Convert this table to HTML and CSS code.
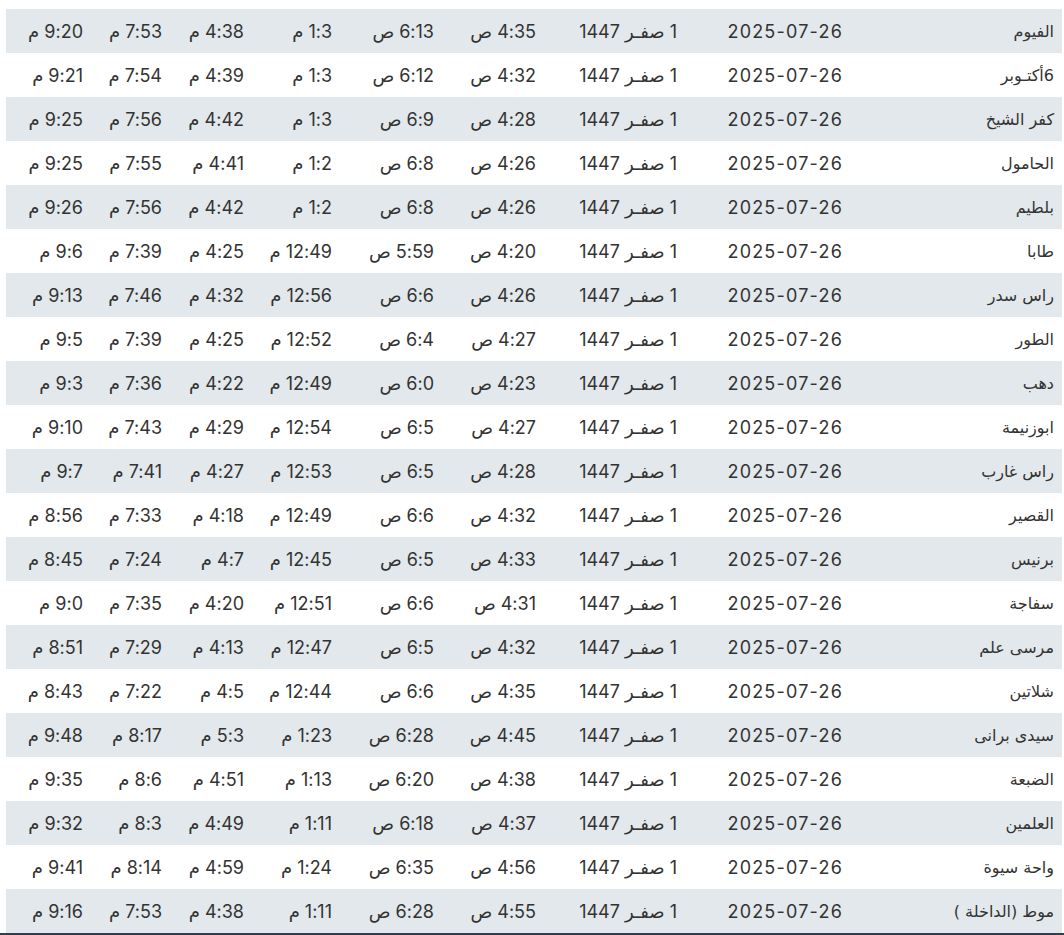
FILE: index.html
```html
<!DOCTYPE html>
<html lang="ar" dir="rtl">
<head>
<meta charset="utf-8">
<title>مواقيت الصلاة</title>
<link rel="stylesheet" href="styles.css">
</head>
<body>
<div class="page">
<table class="times">
<colgroup>
<col class="c-city"><col class="c-greg"><col class="c-hijri"><col class="c-fajr"><col class="c-sun"><col class="c-dhuhr"><col class="c-asr"><col class="c-magh"><col class="c-isha">
</colgroup>
<tbody>
<tr><td class="city">الفيوم</td><td>2025-07-26</td><td>1 صفـر 1447</td><td>4:35 ص</td><td>6:13 ص</td><td>1:3 م</td><td>4:38 م</td><td>7:53 م</td><td>9:20 م</td></tr>
<tr><td class="city">6أكتـوبر</td><td>2025-07-26</td><td>1 صفـر 1447</td><td>4:32 ص</td><td>6:12 ص</td><td>1:3 م</td><td>4:39 م</td><td>7:54 م</td><td>9:21 م</td></tr>
<tr><td class="city">كفر الشيخ</td><td>2025-07-26</td><td>1 صفـر 1447</td><td>4:28 ص</td><td>6:9 ص</td><td>1:3 م</td><td>4:42 م</td><td>7:56 م</td><td>9:25 م</td></tr>
<tr><td class="city">الحامول</td><td>2025-07-26</td><td>1 صفـر 1447</td><td>4:26 ص</td><td>6:8 ص</td><td>1:2 م</td><td>4:41 م</td><td>7:55 م</td><td>9:25 م</td></tr>
<tr><td class="city">بلطيم</td><td>2025-07-26</td><td>1 صفـر 1447</td><td>4:26 ص</td><td>6:8 ص</td><td>1:2 م</td><td>4:42 م</td><td>7:56 م</td><td>9:26 م</td></tr>
<tr><td class="city">طابا</td><td>2025-07-26</td><td>1 صفـر 1447</td><td>4:20 ص</td><td>5:59 ص</td><td>12:49 م</td><td>4:25 م</td><td>7:39 م</td><td>9:6 م</td></tr>
<tr><td class="city">راس سدر</td><td>2025-07-26</td><td>1 صفـر 1447</td><td>4:26 ص</td><td>6:6 ص</td><td>12:56 م</td><td>4:32 م</td><td>7:46 م</td><td>9:13 م</td></tr>
<tr><td class="city">الطور</td><td>2025-07-26</td><td>1 صفـر 1447</td><td>4:27 ص</td><td>6:4 ص</td><td>12:52 م</td><td>4:25 م</td><td>7:39 م</td><td>9:5 م</td></tr>
<tr><td class="city">دهب</td><td>2025-07-26</td><td>1 صفـر 1447</td><td>4:23 ص</td><td>6:0 ص</td><td>12:49 م</td><td>4:22 م</td><td>7:36 م</td><td>9:3 م</td></tr>
<tr><td class="city">ابوزنيمة</td><td>2025-07-26</td><td>1 صفـر 1447</td><td>4:27 ص</td><td>6:5 ص</td><td>12:54 م</td><td>4:29 م</td><td>7:43 م</td><td>9:10 م</td></tr>
<tr><td class="city">راس غارب</td><td>2025-07-26</td><td>1 صفـر 1447</td><td>4:28 ص</td><td>6:5 ص</td><td>12:53 م</td><td>4:27 م</td><td>7:41 م</td><td>9:7 م</td></tr>
<tr><td class="city">القصير</td><td>2025-07-26</td><td>1 صفـر 1447</td><td>4:32 ص</td><td>6:6 ص</td><td>12:49 م</td><td>4:18 م</td><td>7:33 م</td><td>8:56 م</td></tr>
<tr><td class="city">برنيس</td><td>2025-07-26</td><td>1 صفـر 1447</td><td>4:33 ص</td><td>6:5 ص</td><td>12:45 م</td><td>4:7 م</td><td>7:24 م</td><td>8:45 م</td></tr>
<tr><td class="city">سفاجة</td><td>2025-07-26</td><td>1 صفـر 1447</td><td>4:31 ص</td><td>6:6 ص</td><td>12:51 م</td><td>4:20 م</td><td>7:35 م</td><td>9:0 م</td></tr>
<tr><td class="city">مرسى علم</td><td>2025-07-26</td><td>1 صفـر 1447</td><td>4:32 ص</td><td>6:5 ص</td><td>12:47 م</td><td>4:13 م</td><td>7:29 م</td><td>8:51 م</td></tr>
<tr><td class="city">شلاتين</td><td>2025-07-26</td><td>1 صفـر 1447</td><td>4:35 ص</td><td>6:6 ص</td><td>12:44 م</td><td>4:5 م</td><td>7:22 م</td><td>8:43 م</td></tr>
<tr><td class="city">سيدى برانى</td><td>2025-07-26</td><td>1 صفـر 1447</td><td>4:45 ص</td><td>6:28 ص</td><td>1:23 م</td><td>5:3 م</td><td>8:17 م</td><td>9:48 م</td></tr>
<tr><td class="city">الضبعة</td><td>2025-07-26</td><td>1 صفـر 1447</td><td>4:38 ص</td><td>6:20 ص</td><td>1:13 م</td><td>4:51 م</td><td>8:6 م</td><td>9:35 م</td></tr>
<tr><td class="city">العلمين</td><td>2025-07-26</td><td>1 صفـر 1447</td><td>4:37 ص</td><td>6:18 ص</td><td>1:11 م</td><td>4:49 م</td><td>8:3 م</td><td>9:32 م</td></tr>
<tr><td class="city">واحة سيوة</td><td>2025-07-26</td><td>1 صفـر 1447</td><td>4:56 ص</td><td>6:35 ص</td><td>1:24 م</td><td>4:59 م</td><td>8:14 م</td><td>9:41 م</td></tr>
<tr><td class="city">موط (الداخلة )</td><td>2025-07-26</td><td>1 صفـر 1447</td><td>4:55 ص</td><td>6:28 ص</td><td>1:11 م</td><td>4:38 م</td><td>7:53 م</td><td>9:16 م</td></tr>
</tbody>
</table>
</div>
<div class="footer-line"></div>
</body>
</html>
```

FILE: styles.css
```css
html, body {
  margin: 0;
  padding: 0;
  background: #ffffff;
}

body {
  font-family: "Inter", "DejaVu Sans", sans-serif;
  color: #333333;
}

.page {
  padding: 9px 2px 0 6px;
}

.times {
  width: 1056px;
  border-collapse: collapse;
  table-layout: fixed;
}

.c-city { width: 213px; }
.c-greg { width: 164px; }
.c-hijri { width: 141px; }
.c-fajr { width: 102px; }
.c-sun { width: 102px; }
.c-dhuhr { width: 88px; }
.c-asr { width: 82px; }
.c-magh { width: 79px; }
.c-isha { width: 85px; }

.times td {
  height: 44px;
  padding: 0 8px 0 0;
  text-align: right;
  vertical-align: middle;
  font-size: 18px;
  white-space: nowrap;
  box-sizing: border-box;
}

.times td:nth-child(2) {
  letter-spacing: 1.2px;
  padding-right: 6px;
}

.times td:nth-child(n+4) {
  letter-spacing: 0.3px;
}

.times tr:nth-child(odd) {
  background: #e2e8eb;
}

.times td.city {
  font-size: 16px;
  font-family: "DejaVu Sans", sans-serif;
  letter-spacing: 0;
}

.footer-line {
  height: 2px;
  background: #2d3e4f;
}
```
